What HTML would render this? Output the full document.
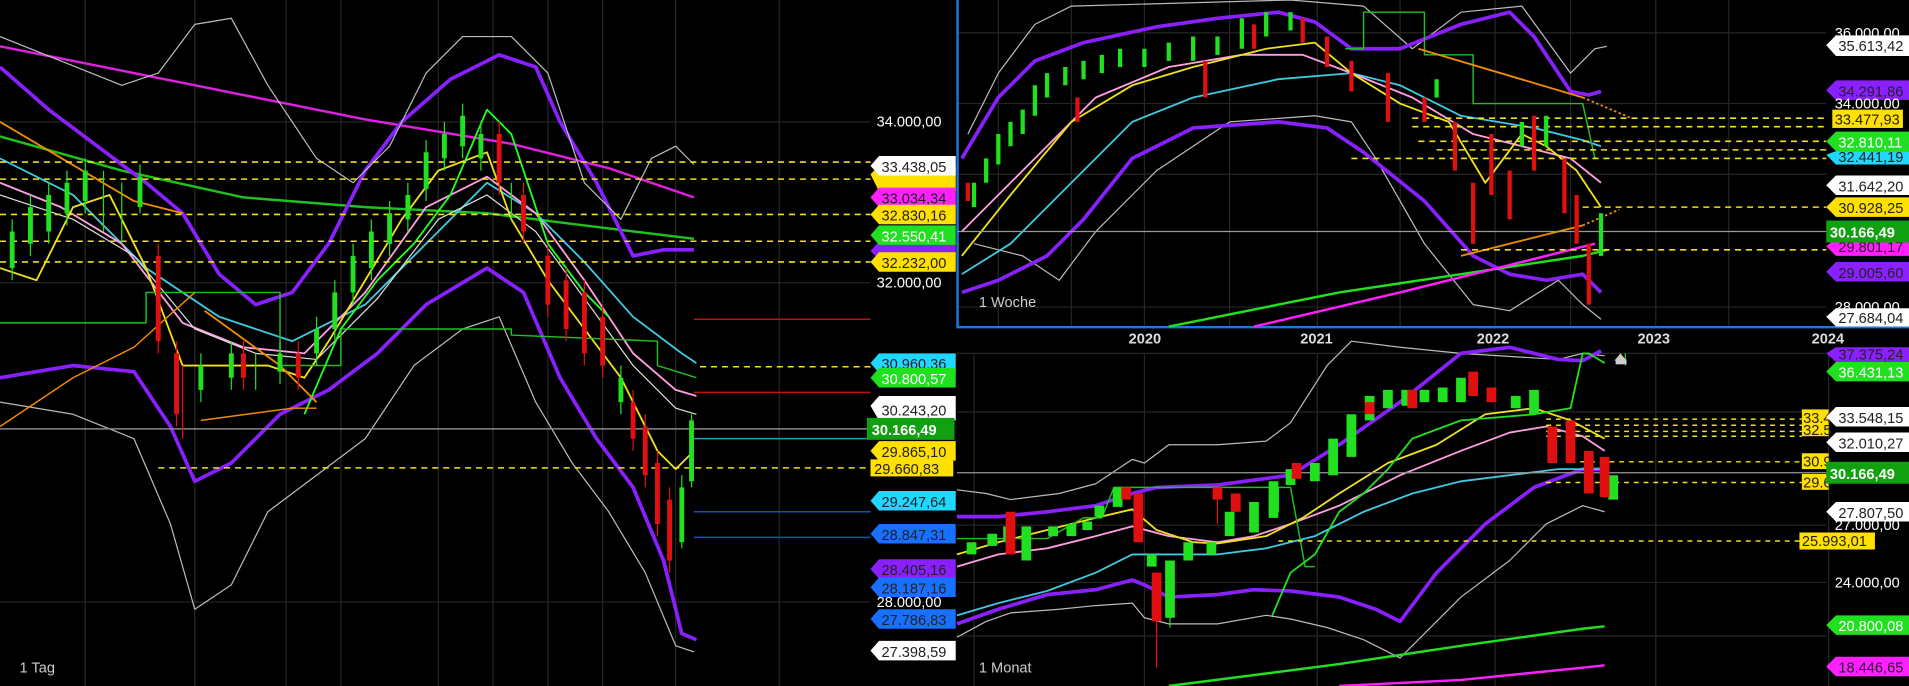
<!DOCTYPE html>
<html><head><meta charset="utf-8"><style>
html,body{margin:0;padding:0;background:#000;overflow:hidden;width:1909px;height:686px}
svg{display:block}
text{font-family:"Liberation Sans",sans-serif;font-size:12px}
</style></head><body>
<svg width="1909" height="686" viewBox="0 0 1568 563" preserveAspectRatio="none" xmlns="http://www.w3.org/2000/svg">
<rect width="1568" height="563" fill="#000"/>
<!-- grid -->
<g stroke="#262626" stroke-width="1">
<path d="M70 0V563M160 0V563M235 0V563M280 0V563M360 0V563M405 0V563M450 0V563M495 0V563M555 0V563M640 0V563M0 100H715M0 232H715M0 494H715"/>
<path d="M820 0V268M880 0V268M940 0V268M1010 0V268M1082 0V268M1150 0V268M1228 0V268M1290 0V268M1360 0V268M1420 0V268M786 27H1500M786 85H1500M786 143H1500M786 252H1500"/>
<path d="M800 290V563M940 290V563M1082 290V563M1228 290V563M1360 290V563M1502 290V563M786 290H1500M786 338H1500M786 431H1500M786 478H1500M786 522H1500"/>
</g>
<!-- LEFT PANEL -->
<g fill="none" stroke-linejoin="round">
<polyline stroke="#e020e0" stroke-width="2" points="0,38 150,68 300,98 420,118 500,138 570,162"/>
<polyline stroke="#20c020" stroke-width="2" points="0,112 100,140 200,162 300,170 400,175 480,185 570,196"/>
<polyline stroke="#8a20ff" stroke-width="3" points="0,55 40,90 80,120 120,150 150,175 180,225 210,250 240,240 270,200 300,140 330,100 370,65 410,45 440,55 460,100 490,150 520,210 545,205 570,205"/>
<polyline stroke="#8a20ff" stroke-width="3" points="0,310 60,300 110,305 140,350 160,395 190,380 230,340 270,320 310,290 350,250 400,220 430,240 460,310 490,360 520,400 545,460 560,520 572,525"/>
<polyline stroke="#bbb" stroke-width="1" points="0,30 50,50 100,70 130,60 160,20 190,15 220,70 260,130 290,150 320,120 350,60 380,30 420,30 450,60 480,150 510,180 535,130 555,120 570,135"/>
<polyline stroke="#bbb" stroke-width="1" points="0,330 60,340 110,360 140,430 160,500 190,480 220,420 260,390 300,360 340,300 380,270 410,260 440,330 470,380 500,420 530,470 555,530 570,535"/>
<polyline stroke="#40c8e0" stroke-width="1.5" points="0,130 60,160 120,220 180,260 240,280 300,250 360,190 400,150 440,175 480,215 520,260 560,290 572,298"/>
<polyline stroke="#ff9ee0" stroke-width="1.5" points="0,150 50,170 100,200 150,265 200,285 250,290 300,240 350,170 400,145 440,175 480,230 520,290 555,320 572,325"/>
<polyline stroke="#ddd" stroke-width="1" points="0,160 60,180 110,210 160,270 210,290 260,295 310,245 360,180 400,160 440,190 480,245 520,300 555,335 572,340"/>
<polyline stroke="#f0e020" stroke-width="1.5" points="0,220 30,230 60,170 90,160 120,220 150,300 180,300 220,300 250,310 270,280 300,230 330,180 360,140 400,125 420,180 450,230 480,270 510,310 540,370 555,385 570,370"/>
<polyline stroke="#20c020" stroke-width="1.2" points="0,265 120,265 120,240 230,240 230,300 280,300 280,270 420,270 420,275 540,280 540,300 572,310"/>
<polyline stroke="#20ff20" stroke-width="1.5" points="250,340 280,270 310,230 340,200 370,160 400,90 420,110 450,200 480,240 500,260"/>
<polyline stroke="#f08c00" stroke-width="1.5" points="0,100 110,165 150,175"/>
<polyline stroke="#f08c00" stroke-width="1.2" points="165,345 240,335 260,335"/>
<polyline stroke="#f08c00" stroke-width="1.2" points="0,350 60,310 110,285 160,240"/>
<polyline stroke="#f08c00" stroke-width="1.5" points="168,255 230,300 260,330"/>
</g>
<g stroke="#f0e020" stroke-width="1.3" stroke-dasharray="5,4">
<path d="M0 133H715M0 147H715M0 176H715M0 198H715M0 215H715M130 384H715M575 301H715"/>
</g>
<g stroke-width="1.2">
<path d="M570 262H715M570 322H715" stroke="#c01010"/>
<path d="M570 360H715" stroke="#20a0c0"/>
<path d="M570 420H715M570 441H715" stroke="#1050c0"/>
<path d="M0 352H715" stroke="#888"/>
</g>
<!-- left candles -->
<g stroke="#20e020" stroke-width="1"><path d="M10 180V230M25 160V210M40 150V200M55 140V185M70 130V175M85 140V190M100 150V200M115 135V175M165 290V330M190 280V320M210 290V320M230 280V315M260 260V300M275 230V280M290 200V250M305 180V230M320 165V210M335 150V190M350 115V165M365 100V140M380 85V130M395 100V140M420 150V180M510 300V340M560 390V450M568 340V400"/></g>
<g stroke="#20e020" stroke-width="4"><path d="M10 190V220M25 170V200M40 160V190M55 150V175M70 140V165M115 145V170M165 300V320M190 290V310M230 290V305M260 270V290M275 240V270M290 210V240M305 190V220M320 175V200M335 160V180M350 125V155M365 110V130M380 95V120M395 110V130M510 310V330M560 400V445M568 345V395"/></g>
<g stroke="#e01010" stroke-width="1"><path d="M130 200V290M145 280V350M150 300V360M200 280V320M245 280V320M410 100V160M430 150V200M450 200V260M465 220V280M480 230V300M495 250V310M520 320V370M530 340V400M540 370V440M550 400V470"/></g>
<g stroke="#e01010" stroke-width="4"><path d="M130 210V280M145 290V340M200 290V310M245 290V310M410 110V150M430 160V190M450 210V250M465 230V270M480 240V290M495 260V300M520 330V360M530 350V390M540 380V430M550 410V460"/></g>
<text x="16" y="552" fill="#ccc" font-size="11">1 Tag</text>
<g font-size="11.5">
<text x="720" y="104" fill="#fff">34.000,00</text>
<text x="720" y="236" fill="#fff">32.000,00</text>
<text x="720" y="498" fill="#fff">28.000,00</text>
</g>
<g font-size="11.5">
<polygon points="715,143 722,136 785,136 785,157 722,157" fill="#ffe000"/>
<polygon points="715,136 722,128 785,128 785,144 722,144" fill="#fff"/><text x="724" y="141" fill="#222">33.438,05</text>
<polygon points="715,162 722,154 785,154 785,170 722,170" fill="#ff20ff"/><text x="724" y="167" fill="#222">33.034,34</text>
<polygon points="715,176 722,168 785,168 785,184 722,184" fill="#ffe000"/><text x="724" y="181" fill="#222">32.830,16</text>
<polygon points="715,206 722,198 785,198 785,213 722,213" fill="#8a20ff"/>
<polygon points="715,193 722,185 785,185 785,201 722,201" fill="#20e020"/><text x="724" y="198" fill="#fff">32.550,41</text>
<polygon points="715,215 722,207 785,207 785,223 722,223" fill="#ffe000"/><text x="724" y="220" fill="#222">32.232,00</text>
<polygon points="715,298 722,290 785,290 785,306 722,306" fill="#20d8ff"/><text x="724" y="303" fill="#222">30.960,36</text>
<polygon points="715,310 722,302 785,302 785,318 722,318" fill="#20e020"/><text x="724" y="315" fill="#fff">30.800,57</text>
<polygon points="715,333 722,325 785,325 785,345 722,345" fill="#fff"/><text x="724" y="341" fill="#222">30.243,20</text>
<rect x="712" y="343" width="72" height="18" fill="#10a010"/><text x="716" y="357" fill="#fff" font-weight="bold" font-size="12.5">30.166,49</text>
<polygon points="715,370 722,362 785,362 785,378 722,378" fill="#ffe000"/><text x="724" y="375" fill="#222">29.865,10</text>
<rect x="715" y="377" width="68" height="14" fill="#ffe000"/><text x="718" y="389" fill="#222">29.660,83</text>
<polygon points="715,411 722,403 785,403 785,419 722,419" fill="#20d8ff"/><text x="724" y="416" fill="#222">29.247,64</text>
<polygon points="715,438 722,430 785,430 785,446 722,446" fill="#1870ff"/><text x="724" y="443" fill="#222">28.847,31</text>
<polygon points="715,467 722,459 785,459 785,475 722,475" fill="#8a20ff"/><text x="724" y="472" fill="#222">28.405,16</text>
<polygon points="715,482 722,474 785,474 785,490 722,490" fill="#1870ff"/><text x="724" y="487" fill="#222">28.187,16</text>
<polygon points="715,508 722,500 785,500 785,516 722,516" fill="#1870ff"/><text x="724" y="513" fill="#222">27.786,83</text>
<polygon points="715,534 722,526 785,526 785,542 722,542" fill="#fff"/><text x="724" y="539" fill="#222">27.398,59</text>
</g>
<!-- TOP RIGHT -->
<path d="M786.5 0V268.5H1568" stroke="#1a78e0" stroke-width="2" fill="none"/>
<g fill="none" stroke-linejoin="round">
<polyline stroke="#bbb" stroke-width="1" points="795,110 820,60 850,20 880,5 1060,0 1120,5 1160,40 1200,10 1250,5 1290,60 1310,40 1320,38"/>
<polyline stroke="#bbb" stroke-width="1" points="800,200 840,210 870,230 900,190 950,140 1010,100 1080,95 1110,100 1130,130 1170,200 1210,250 1240,255 1280,230 1300,250 1315,262"/>
<polyline stroke="#8a20ff" stroke-width="3" points="790,130 820,80 850,50 890,35 950,22 1000,15 1050,10 1080,18 1110,40 1150,40 1200,20 1240,10 1260,30 1290,75 1305,78 1315,75"/>
<polyline stroke="#8a20ff" stroke-width="3" points="790,240 820,230 860,210 890,180 930,130 980,105 1050,100 1090,105 1120,125 1170,165 1210,210 1240,225 1270,230 1300,225 1315,240"/>
<polyline stroke="#40c8e0" stroke-width="1.5" points="790,225 830,200 880,150 930,100 980,80 1050,65 1110,60 1150,70 1200,95 1260,105 1300,115 1315,120"/>
<polyline stroke="#ff9ee0" stroke-width="1.5" points="790,190 840,140 900,80 960,55 1020,45 1070,45 1110,60 1160,80 1210,110 1250,120 1290,130 1315,150"/>
<polyline stroke="#f0e020" stroke-width="1.5" points="790,210 830,160 880,100 930,70 980,55 1040,40 1080,35 1110,60 1150,85 1190,100 1220,150 1250,110 1270,120 1295,140 1315,170"/>
<polyline stroke="#20c020" stroke-width="1.2" points="1105,40 1120,40 1120,10 1170,10 1170,45 1210,45 1210,85 1290,85 1300,85 1310,130"/>
<polyline stroke="#20e020" stroke-width="2" points="960,268 1100,240 1200,225 1300,210 1320,205"/>
<polyline stroke="#ff20ff" stroke-width="2" points="1030,268 1150,240 1250,215 1310,200"/>
<polyline stroke="#f08c00" stroke-width="1.5" points="1165,40 1300,80"/>
<polyline stroke="#f08c00" stroke-width="1.5" stroke-dasharray="2,2" points="1300,80 1340,97"/>
<polyline stroke="#f08c00" stroke-width="1.5" points="1200,210 1300,185"/>
<polyline stroke="#f08c00" stroke-width="1.5" stroke-dasharray="2,2" points="1300,185 1330,172"/>
</g>
<g stroke="#f0e020" stroke-width="1.3" stroke-dasharray="5,4"><path d="M1160 97H1500M1160 104H1500M1165 116H1500M1180 123H1500M1110 130H1500M1300 170H1500M1200 205H1500"/></g>
<path d="M786 190H1500" stroke="#999" stroke-width="1"/>
<g stroke="#20e020" stroke-width="3.5"><path d="M800 150V170M810 130V150M820 110V135M830 100V120M840 90V110M850 70V95M860 60V80M875 55V70M890 50V65M905 45V60M920 40V55M940 40V55M960 35V50M980 30V50M1000 30V45M1020 15V40M1040 10V30M1060 10V25M1180 65V80M1250 100V120M1270 95V120M1315 175V210"/></g>
<g stroke="#e01010" stroke-width="3.5"><path d="M795 150V165M885 80V100M990 50V80M1030 20V40M1070 15V35M1090 30V55M1110 50V75M1140 60V100M1170 80V100M1195 100V140M1210 150V200M1225 110V160M1240 140V180M1260 95V140M1285 130V175M1295 160V200M1305 200V250"/></g>
<text x="804" y="252" fill="#ccc" font-size="11">1 Woche</text>
<g font-size="11.5">
<text x="1507" y="31" fill="#fff">36.000,00</text>
<polygon points="1500,37 1508,29 1568,29 1568,46 1508,46" fill="#fff"/><text x="1510" y="42" fill="#222">35.613,42</text>
<polygon points="1500,74 1508,66 1568,66 1568,82 1508,82" fill="#8a20ff"/><text x="1510" y="79" fill="#222">34.291,86</text>
<text x="1507" y="89" fill="#fff">34.000,00</text>
<rect x="1505" y="90" width="58" height="15" fill="#ffe000"/><text x="1507" y="102" fill="#222">33.477,93</text>
<polygon points="1500,116 1508,108 1568,108 1568,124 1508,124" fill="#20e020"/><text x="1510" y="121" fill="#fff">32.810,11</text>
<polygon points="1500,127 1508,124 1568,124 1568,135 1508,135" fill="#20d8ff"/><text x="1510" y="133" fill="#222">32.441,19</text>
<polygon points="1500,152 1508,144 1568,144 1568,160 1508,160" fill="#fff"/><text x="1510" y="157" fill="#222">31.642,20</text>
<polygon points="1500,170 1508,162 1568,162 1568,178 1508,178" fill="#ffe000"/><text x="1510" y="175" fill="#222">30.928,25</text>
<polygon points="1500,202 1508,196 1568,196 1568,210 1508,210" fill="#ff20ff"/><text x="1510" y="207" fill="#222">29.801,17</text>
<rect x="1500" y="181" width="68" height="18" fill="#10a010"/><text x="1503" y="195" fill="#fff" font-weight="bold" font-size="12.5">30.166,49</text>
<polygon points="1500,223 1508,215 1568,215 1568,231 1508,231" fill="#8a20ff"/><text x="1510" y="228" fill="#222">29.005,60</text>
<text x="1507" y="256" fill="#fff">28.000,00</text>
<polygon points="1500,260 1508,253 1568,253 1568,268 1508,268" fill="#fff"/><text x="1510" y="265" fill="#222">27.684,04</text>
</g>
<g font-size="12" font-weight="bold" fill="#ddd">
<text x="927" y="282">2020</text><text x="1068" y="282">2021</text><text x="1213" y="282">2022</text><text x="1345" y="282">2023</text><text x="1488" y="282">2024</text>
</g>
<!-- BOTTOM RIGHT -->
<g fill="none" stroke-linejoin="round">
<polyline stroke="#bbb" stroke-width="1" points="786,402 810,405 830,410 870,405 900,397 930,377 940,380 960,365 1000,365 1040,362 1060,347 1090,300 1110,280 1150,285 1200,290 1280,295 1300,290 1318,292"/>
<polyline stroke="#bbb" stroke-width="1" points="786,523 810,510 830,503 870,500 900,497 930,495 940,507 960,512 1000,512 1040,505 1060,508 1090,515 1120,525 1150,540 1200,490 1240,460 1270,430 1300,415 1318,420"/>
<polyline stroke="#8a20ff" stroke-width="3" points="786,424 820,424 860,420 900,415 930,405 950,400 1000,398 1060,390 1100,365 1150,330 1200,290 1240,285 1280,295 1300,296 1315,288"/>
<polyline stroke="#8a20ff" stroke-width="3" points="786,512 820,500 860,488 900,484 930,476 940,480 960,490 1000,488 1030,484 1060,485 1100,490 1130,500 1150,510 1180,470 1220,430 1260,400 1300,385 1315,385"/>
<polyline stroke="#40c8e0" stroke-width="1.5" points="786,505 820,495 860,485 900,470 930,455 960,455 1000,455 1040,450 1080,440 1120,420 1160,405 1200,395 1240,390 1280,385 1315,385"/>
<polyline stroke="#ff9ee0" stroke-width="1.5" points="786,465 820,455 860,450 900,440 930,432 960,440 1000,445 1030,440 1060,430 1100,415 1150,390 1200,370 1240,355 1270,350 1300,358 1318,370"/>
<polyline stroke="#f0e020" stroke-width="1.5" points="786,455 820,445 860,435 900,425 930,418 950,435 980,445 1000,446 1040,440 1070,425 1100,405 1140,380 1180,365 1220,340 1260,335 1290,345 1318,360"/>
<polyline stroke="#20c020" stroke-width="1.2" points="786,442 840,442 860,442 890,425 905,425 915,400 1050,400 1060,400 1072,465 1080,465"/>
<polyline stroke="#20e020" stroke-width="1.5" points="1045,505 1060,470 1080,455 1100,420 1120,405 1140,385 1160,360 1200,345 1260,340 1290,335 1300,290 1305,290 1318,298"/>
<polyline stroke="#20e020" stroke-width="2" points="960,563 1100,545 1200,530 1300,516 1318,514"/>
<polyline stroke="#ff20ff" stroke-width="2" points="1100,563 1200,558 1300,548 1318,546"/>
</g>
<g stroke="#f0e020" stroke-width="1.2" stroke-dasharray="4,4"><path d="M1270 344H1480M1270 349H1480M1270 354H1480M1270 358H1480M1290 379H1480M1270 396H1480M1050 444H1480"/></g>
<path d="M786 388H1500" stroke="#999" stroke-width="1"/>
<g stroke="#20e020" stroke-width="1"><path d="M961 460V515M1050 400V420M1335 290V300"/></g>
<g stroke="#20e020" stroke-width="8"><path d="M798 445V455M815 438V448M828 432V445M843 432V460M865 432V440M880 430V440M893 428V435M903 415V424M918 400V416M946 455V465M961 460V507M976 445V460M995 445V455M1010 420V440M1030 412V437M1046 395V425M1060 385V398M1080 380V395M1095 360V390M1110 340V375M1125 325V345M1140 320V335M1155 320V333M1170 320V330M1185 318V330M1200 310V330M1245 325V335M1260 320V340M1325 390V410"/></g>
<g stroke="#e01010" stroke-width="1"><path d="M950 470V548M1000 400V430"/></g>
<g stroke="#e01010" stroke-width="8"><path d="M830 420V455M925 400V410M935 405V445M950 470V510M1000 400V410M1015 405V420M1065 380V393M1125 330V340M1160 320V335M1210 305V325M1225 318V330M1275 350V380M1290 345V380M1305 370V405M1318 375V408"/></g>
<text x="804" y="552" fill="#ccc" font-size="11">1 Monat</text>
<path d="M1326 296L1331 290L1336 296Z" fill="#ccc"/><rect x="1327" y="295" width="9" height="4" fill="#ccc"/>
<g font-size="11.5">
<polygon points="1500,290 1508,285 1568,285 1568,297 1508,297" fill="#8a20ff"/><text x="1510" y="295" fill="#222">37.375,24</text>
<polygon points="1500,305 1508,297 1568,297 1568,313 1508,313" fill="#20e020"/><text x="1510" y="310" fill="#fff">36.431,13</text>
<rect x="1480" y="336" width="22" height="22" fill="#ffe000"/><text x="1481" y="347" fill="#222">33.4</text><text x="1481" y="357" fill="#222">32.5</text>
<polygon points="1500,342 1508,334 1568,334 1568,350 1508,350" fill="#fff"/><text x="1510" y="347" fill="#222">33.548,15</text>
<polygon points="1500,363 1508,355 1568,355 1568,371 1508,371" fill="#fff"/><text x="1510" y="368" fill="#222">32.010,27</text>
<rect x="1480" y="372" width="22" height="13" fill="#ffe000"/><text x="1481" y="383" fill="#222">30.9</text>
<rect x="1480" y="389" width="22" height="13" fill="#ffe000"/><text x="1481" y="400" fill="#222">29.6</text>
<rect x="1500" y="379" width="68" height="18" fill="#10a010"/><text x="1503" y="393" fill="#fff" font-weight="bold" font-size="12.5">30.166,49</text>
<polygon points="1500,420 1508,412 1568,412 1568,428 1508,428" fill="#fff"/><text x="1510" y="425" fill="#222">27.807,50</text>
<text x="1507" y="435" fill="#fff">27.000,00</text>
<rect x="1478" y="437" width="62" height="14" fill="#ffe000"/><text x="1480" y="448" fill="#222">25.993,01</text>
<text x="1507" y="482" fill="#fff">24.000,00</text>
<polygon points="1500,513 1508,505 1568,505 1568,521 1508,521" fill="#20e020"/><text x="1510" y="518" fill="#fff">20.800,08</text>
<polygon points="1500,547 1508,539 1568,539 1568,555 1508,555" fill="#ff20ff"/><text x="1510" y="552" fill="#222">18.446,65</text>
</g>
</svg>
</body></html>
